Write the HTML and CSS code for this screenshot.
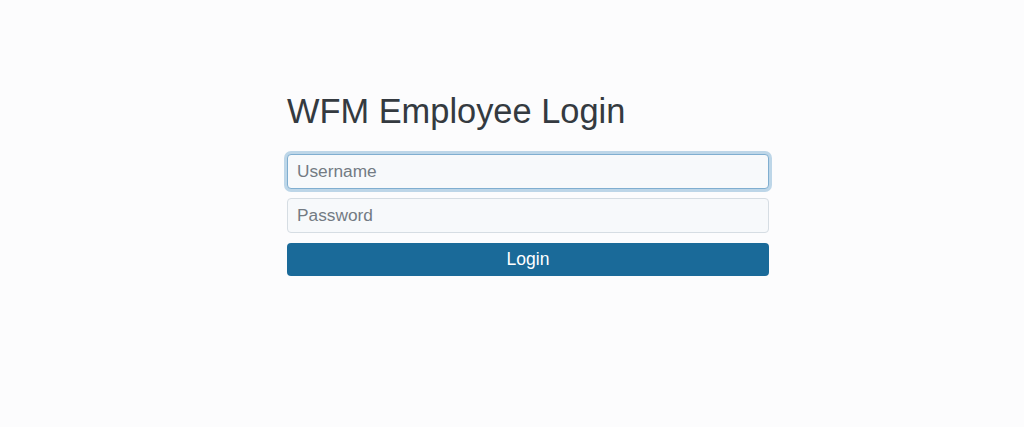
FILE: index.html
```html
<!DOCTYPE html>
<html lang="en">
<head>
<meta charset="utf-8">
<title>WFM Employee Login</title>
<link rel="stylesheet" href="styles.css">
</head>
<body>
<main class="page">
  <form class="login">
    <h1 class="title">WFM Employee Login</h1>
    <input class="field field-focus" type="text" placeholder="Username" autofocus>
    <input class="field" type="password" placeholder="Password">
    <button class="btn" type="button">Login</button>
  </form>
</main>
</body>
</html>
```
FILE: styles.css
```css
html, body {
  margin: 0;
  padding: 0;
  background: #fcfcfd;
  font-family: "Liberation Sans", Arial, sans-serif;
}
.page {
  display: flex;
  justify-content: center;
  padding-top: 93px;
}
.login {
  width: 482px;
  margin-left: 32px;
  display: flex;
  flex-direction: column;
  gap: 9px;
}
.title {
  margin: 0 0 14px 0;
  font-size: 34.4px;
  font-weight: 400;
  line-height: 1.1;
  color: #343a40;
}
.field {
  box-sizing: border-box;
  height: 35px;
  width: 100%;
  padding: 4px 9px;
  font-family: "Liberation Sans", Arial, sans-serif;
  font-size: 17.3px;
  color: #333;
  background: #f7f9fb;
  border: 1px solid #d6dde3;
  border-radius: 4px;
  outline: none;
  caret-color: #222;
}
.field::placeholder {
  color: #737b83;
}
.field-focus {
  border-color: #80aed0;
  box-shadow: 0 0 0 3px #bdd6e8;
}
.btn {
  height: 33px;
  width: 100%;
  margin-top: 1px;
  border: none;
  border-radius: 4px;
  background: #1a6a99;
  color: #fff;
  font-family: "Liberation Sans", Arial, sans-serif;
  font-size: 17.5px;
  cursor: pointer;
}
```
